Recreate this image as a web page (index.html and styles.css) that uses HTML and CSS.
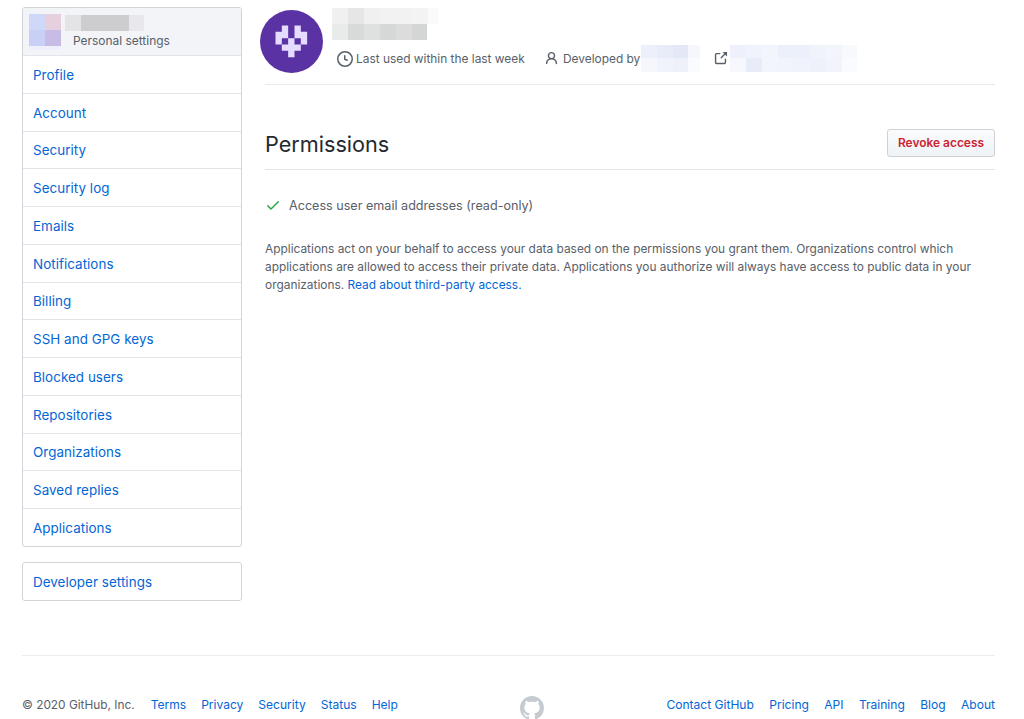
FILE: index.html
```html
<!DOCTYPE html>
<html lang="en">
<head>
<meta charset="utf-8">
<title>Application settings</title>
<link rel="stylesheet" href="styles.css">
</head>
<body>
<div class="page">
  <div class="layout">
    <aside class="sidebar">
      <nav class="menu">
        <div class="menu-head">
          <svg class="mosaic side-avatar" width="32" height="36" viewBox="0 0 32 36">
            <rect width="16" height="16" fill="#d0d8fa"/><rect x="16" width="16" height="16" fill="#e6d0e0"/>
            <rect y="16" width="16" height="16" fill="#c8d0f6"/><rect x="16" y="16" width="16" height="16" fill="#c8bce6"/>
            <rect y="32" width="32" height="4" fill="#eef1fc"/>
          </svg>
          <div class="menu-id">
            <svg class="mosaic" width="79" height="16" viewBox="0 0 79 16">
              <rect width="16" height="16" fill="#e4e4e6"/><rect x="16" width="48" height="16" fill="#cdcdd0"/><rect x="64" width="15" height="16" fill="#e8e8ec"/>
            </svg>
            <span class="menu-caption">Personal settings</span>
          </div>
        </div>
        <a class="menu-item" href="#">Profile</a>
        <a class="menu-item" href="#">Account</a>
        <a class="menu-item" href="#">Security</a>
        <a class="menu-item" href="#">Security log</a>
        <a class="menu-item" href="#">Emails</a>
        <a class="menu-item" href="#">Notifications</a>
        <a class="menu-item" href="#">Billing</a>
        <a class="menu-item" href="#">SSH and GPG keys</a>
        <a class="menu-item" href="#">Blocked users</a>
        <a class="menu-item" href="#">Repositories</a>
        <a class="menu-item" href="#">Organizations</a>
        <a class="menu-item" href="#">Saved replies</a>
        <a class="menu-item" href="#">Applications</a>
      </nav>
      <nav class="menu">
        <a class="menu-item" href="#">Developer settings</a>
      </nav>
    </aside>
    <main class="main">
      <header class="app-head">
        <svg class="app-avatar" width="63" height="63" viewBox="0 0 63 63">
          <circle cx="31.5" cy="31.5" r="31.5" fill="#5a32a3"/>
          <g transform="translate(15.5 15.5) scale(6.33)">
            <path fill="#e6dcff" d="M1 0h1v1H1zM3 0h1v1H3zM0 1h2v1H0zM3 1h2v1H3zM0 2h1v1H0zM2 2h1v1H2zM4 2h1v1H4zM1 3h3v1H1zM2 4h1v1H2z"/>
          </g>
        </svg>
        <div class="app-info">
          <svg class="mosaic" width="106" height="32" viewBox="0 0 106 32">
            <rect width="16" height="16" fill="#f0f0f0"/><rect x="16" width="16" height="16" fill="#e6e6e6"/><rect x="32" width="16" height="16" fill="#f0f0f0"/><rect x="48" width="32" height="16" fill="#f2f2f2"/><rect x="80" width="16" height="16" fill="#f3f3f3"/><rect x="96" width="10" height="16" fill="#fafafa"/>
            <rect y="16" width="16" height="16" fill="#e9eaea"/><rect x="16" y="16" width="16" height="16" fill="#d8dada"/><rect x="32" y="16" width="16" height="16" fill="#dfe0e0"/><rect x="48" y="16" width="16" height="16" fill="#d6d7d7"/><rect x="64" y="16" width="16" height="16" fill="#dcdcdc"/><rect x="80" y="16" width="15" height="16" fill="#d4d5d5"/>
          </svg>
          <div class="meta">
            <span class="meta-item meta-used">
              <svg class="icon" width="16" height="16" viewBox="0 0 16 16"><path d="M1.5 8a6.5 6.5 0 1113 0 6.5 6.5 0 01-13 0zM8 0a8 8 0 100 16A8 8 0 008 0zm.5 4.75a.75.75 0 00-1.5 0v3.5a.75.75 0 00.471.696l2.5 1a.75.75 0 00.557-1.392L8.5 7.742V4.75z"/></svg>
              Last used within the last week
            </span>
            <span class="meta-item meta-dev">
              <svg class="icon" width="15" height="15" viewBox="0 0 16 16"><path d="M10.5 5a2.5 2.5 0 11-5 0 2.5 2.5 0 015 0zm.061 3.073a4 4 0 10-5.123 0 6.004 6.004 0 00-3.431 5.142.75.75 0 001.498.07 4.5 4.5 0 018.99 0 .75.75 0 101.498-.07 6.005 6.005 0 00-3.432-5.142z"/></svg>
              Developed by
              <svg class="mosaic" width="59" height="27" viewBox="0 0 59 27">
                <rect width="16" height="13" fill="#edf0fa"/><rect x="16" width="16" height="13" fill="#e8ecf8"/><rect x="32" width="15" height="13" fill="#e3e8f6"/><rect x="47" width="12" height="13" fill="#f6f7fc"/>
                <rect y="13" width="16" height="14" fill="#f5f7fd"/><rect x="16" y="13" width="16" height="14" fill="#f0f3fb"/><rect x="32" y="13" width="15" height="14" fill="#eef1fa"/><rect x="47" y="13" width="12" height="14" fill="#fafbfe"/>
              </svg>
            </span>
            <span class="meta-item meta-link">
              <svg class="icon" width="15" height="15" viewBox="0 0 16 16"><path d="M10.604 1h4.146a.25.25 0 01.25.25v4.146a.25.25 0 01-.427.177L13.03 4.03 9.28 7.78a.75.75 0 01-1.06-1.06l3.75-3.75-1.543-1.543A.25.25 0 0110.604 1zM3.75 2A1.75 1.75 0 002 3.75v8.5c0 .966.784 1.75 1.75 1.75h8.5A1.75 1.75 0 0014 12.25v-3.5a.75.75 0 00-1.5 0v3.5a.25.25 0 01-.25.25h-8.5a.25.25 0 01-.25-.25v-8.5a.25.25 0 01.25-.25h3.5a.75.75 0 000-1.5h-3.5z"/></svg>
              <svg class="mosaic" width="127" height="27" viewBox="0 0 127 27">
                <rect width="16" height="13" fill="#eef1fb"/><rect x="16" width="16" height="13" fill="#f0f3fb"/><rect x="32" width="16" height="13" fill="#f3f5fc"/><rect x="48" width="32" height="13" fill="#ecf0fa"/><rect x="80" width="16" height="13" fill="#f1f3fb"/><rect x="96" width="16" height="13" fill="#f3f5fc"/><rect x="112" width="15" height="13" fill="#f8f9fd"/>
                <rect y="13" width="16" height="14" fill="#f7f8fd"/><rect x="16" y="13" width="16" height="14" fill="#e8ecf8"/><rect x="32" y="13" width="16" height="14" fill="#f3f5fc"/><rect x="48" y="13" width="16" height="14" fill="#f2f4fc"/><rect x="64" y="13" width="16" height="14" fill="#f0f3fb"/><rect x="80" y="13" width="16" height="14" fill="#eef1fa"/><rect x="96" y="13" width="16" height="14" fill="#f2f4fc"/><rect x="112" y="13" width="15" height="14" fill="#fafbfe"/>
              </svg>
            </span>
          </div>
        </div>
      </header>
      <section class="section-head">
        <h2 class="section-title">Permissions</h2>
        <button class="btn-danger" type="button">Revoke access</button>
      </section>
      <div class="permission">
        <svg class="check" width="16" height="16" viewBox="0 0 16 16"><path d="M13.78 4.22a.75.75 0 010 1.06l-7.25 7.25a.75.75 0 01-1.06 0L2.22 9.28a.75.75 0 011.06-1.06L6 10.94l6.72-6.72a.75.75 0 011.06 0z"/></svg>
        <span>Access user email addresses (read-only)</span>
      </div>
      <p class="note">Applications act on your behalf to access your data based on the permissions you grant them. Organizations control which applications are allowed to access their private data. Applications you authorize will always have access to public data in your organizations. <a href="#">Read about third-party access.</a></p>
    </main>
  </div>
  <footer class="footer">
    <div class="foot-group">
      <span class="copy">© 2020 GitHub, Inc.</span>
      <a href="#">Terms</a>
      <a href="#">Privacy</a>
      <a href="#">Security</a>
      <a href="#">Status</a>
      <a href="#">Help</a>
    </div>
    <svg class="mark" width="24" height="24" viewBox="0 0 16 16"><path d="M8 0C3.58 0 0 3.58 0 8c0 3.54 2.29 6.53 5.47 7.59.4.07.55-.17.55-.38 0-.19-.01-.82-.01-1.49-2.01.37-2.53-.49-2.69-.94-.09-.23-.48-.94-.82-1.13-.28-.15-.68-.52-.01-.53.63-.01 1.08.58 1.23.82.72 1.21 1.87.87 2.33.66.07-.52.28-.87.51-1.07-1.78-.2-3.64-.89-3.64-3.95 0-.87.31-1.59.82-2.15-.08-.2-.36-1.02.08-2.12 0 0 .67-.21 2.2.82.64-.18 1.32-.27 2-.27.68 0 1.36.09 2 .27 1.53-1.04 2.2-.82 2.2-.82.44 1.1.16 1.92.08 2.12.51.56.82 1.27.82 2.15 0 3.07-1.87 3.75-3.65 3.95.29.25.54.73.54 1.48 0 1.07-.01 1.93-.01 2.2 0 .21.15.46.55.38A8.013 8.013 0 0016 8c0-4.42-3.58-8-8-8z"/></svg>
    <div class="foot-group foot-right">
      <a href="#">Contact GitHub</a>
      <a href="#">Pricing</a>
      <a href="#">API</a>
      <a href="#">Training</a>
      <a href="#">Blog</a>
      <a href="#">About</a>
    </div>
  </footer>
</div>
</body>
</html>
```
FILE: styles.css
```css
* { box-sizing: border-box; }
html, body { margin: 0; height: 100%; overflow: hidden; background: #fff; }
body { font-family: Inter, "Noto Sans", "Liberation Sans", sans-serif; color: #24292e; }
a { color: #0366d6; text-decoration: none; }
.page { height: 719px; overflow: hidden; padding: 7px 29px 0 22px; }
.layout { display: flex; gap: 23px; height: 593px; }
.sidebar { width: 220px; flex: none; display: flex; flex-direction: column; gap: 15px; }
.menu { flex: none; display: flex; flex-direction: column; border: 1px solid #d1d5da; border-radius: 3px; overflow: hidden; }
.menu-head { flex: none; display: flex; height: 48px; background: #f3f4f8; border-bottom: 1px solid #e1e4e8; padding: 6px 0 0 6px; }
.side-avatar { flex: none; }
.menu-id { display: flex; flex-direction: column; margin-left: 4px; }
.menu-id .mosaic { margin-top: 1px; }
.menu-caption { font-size: 11.95px; line-height: 14px; color: #586069; margin: 3px 0 0 8px; }
.menu-item { flex: none; display: flex; align-items: center; height: 37.75px; padding: 1px 0 0 10px; font-size: 13.4px; letter-spacing: .05px; border-bottom: 1px solid #e1e4e8; }
.menu-item:last-child { height: 36.75px; border-bottom: 0; }
.main { width: 730px; flex: none; }
.app-head { display: flex; height: 78px; border-bottom: 1px solid #e8e9ec; margin-top: 0; }
.app-avatar { flex: none; margin: 3px 0 0 -5px; }
.app-info { margin-left: 9px; margin-top: 1px; display: flex; flex-direction: column; }
.mosaic { display: block; flex: none; }
.meta { display: flex; align-items: center; height: 27px; margin-top: 5px; font-size: 11.9px; color: #586069; }
.meta-item { display: flex; align-items: center; white-space: nowrap; }
.icon { fill: #586069; flex: none; }
.meta-used { gap: 3px; margin-left: 5px; width: 207px; }
.meta-dev { gap: 4px; width: 169px; }
.meta-dev .mosaic { margin-left: -3px; }
.meta-link { gap: 2px; }
.section-head { display: flex; justify-content: space-between; align-items: center; height: 42px; margin-top: 43px; border-bottom: 1px solid #e1e4e8; padding-bottom: 12px; }
.section-title { margin: 2px 0 0; font-size: 21.65px; font-weight: 400; line-height: 30px; color: #24292e; }
.btn-danger { width: 108px; height: 28px; padding: 0; font: 600 11.95px Inter, "Noto Sans", sans-serif; color: #cb2431; background: linear-gradient(#fafbfc, #eff3f6); border: 1px solid #ced1d6; border-radius: 3px; }
.permission { display: flex; align-items: center; height: 20px; margin-top: 25px; font-size: 12.6px; color: #586069; }
.check { fill: #28a745; flex: none; margin-right: 8px; }
.note { margin: 25px 0 0; font-size: 11.9px; line-height: 18px; color: #586069; }
.footer { display: flex; justify-content: space-between; align-items: flex-start; margin-top: 55px; padding-top: 40px; border-top: 1px solid #eaecef; }
.foot-group { display: flex; gap: 15px; font-size: 12.05px; line-height: 18px; }
.foot-right { gap: 15.4px; }
.copy { color: #586069; font-size: 11.85px; margin-right: 1px; }
.mark { fill: #c6cbd1; flex: none; }
```
